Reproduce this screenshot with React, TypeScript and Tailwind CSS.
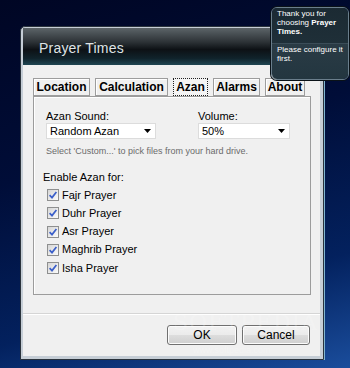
import React from "react";

const tabs = [
  { label: "Location", w: "w-[57px]", active: false },
  { label: "Calculation", w: "w-[73px]", active: false },
  { label: "Azan", w: "w-[35px]", active: true },
  { label: "Alarms", w: "w-[47px]", active: false },
  { label: "About", w: "w-[40px]", active: false },
];

const prayers = ["Fajr Prayer", "Duhr Prayer", "Asr Prayer", "Maghrib Prayer", "Isha Prayer"];

function Arrow() {
  return (
    <svg width="7" height="4" viewBox="0 0 7 4" className="shrink-0">
      <polygon points="0,0 7,0 3.5,4" fill="#000" />
    </svg>
  );
}

function Select({ value, w }: { value: string; w: string }) {
  return (
    <div className={`${w} h-[16px] bg-white border border-[#dcdcdc] flex items-center justify-between pl-[3px] pr-[4px]`}>
      <span className="text-[11px] leading-none text-black">{value}</span>
      <Arrow />
    </div>
  );
}

function Checkbox() {
  return (
    <div className="w-[12px] h-[12px] border border-[#8e8f8f] bg-[linear-gradient(135deg,#d6d6d6,#fbfbfb)] flex items-center justify-center">
      <svg width="10" height="10" viewBox="0 0 10 10">
        <path d="M1.6 5.2 L4 7.6 L8.4 2" stroke="#3b5fc9" strokeWidth="1.7" fill="none" />
      </svg>
    </div>
  );
}

function Button({ label, w }: { label: string; w: string }) {
  return (
    <div
      className={`${w} h-[20px] rounded-[3px] border border-[#707070] shadow-[inset_0_0_0_1px_#fcfcfc] bg-[linear-gradient(to_bottom,#f2f2f2_0%,#ebebeb_50%,#dddddd_51%,#cfcfcf_100%)] flex items-center justify-center text-[12px] text-black`}
    >
      {label}
    </div>
  );
}

export default function App() {
  return (
    <div className="relative w-[350px] h-[368px] overflow-hidden font-['Liberation_Sans',Arial,sans-serif] bg-[linear-gradient(165deg,#000624_0%,#000d38_40%,#03215e_75%,#1a4d9c_100%)]">
      <div className="pt-[26px] pl-[20px]">
        {/* dialog window */}
        <div className="w-[304px] h-[334px] flex flex-col rounded-t-[5px] border border-[#2a333c] bg-[#c6ced6] pt-[1px] pl-[2px] pr-[3px] pb-[3px] shadow-[1px_0_0_#7fb4d0]">
          <div className="h-[37px] shrink-0 flex items-center pl-[16px] pt-[3px] bg-[linear-gradient(to_bottom,#5c6468_0%,#2c3236_38%,#0d1115_58%,#10232b_82%,#1f4652_100%)]">
            <span className="text-[14px] text-[#dfe3e5] tracking-[0.2px]">Prayer Times</span>
          </div>

          <div className="flex-1 bg-[#f0f0f0] flex flex-col">
            <div className="pt-[13px] pl-[10px]">
              {/* tabs */}
              <div className="flex gap-[5px] h-[18px]">
                {tabs.map((t) => (
                  <div
                    key={t.label}
                    className={
                      t.active
                        ? `${t.w} h-[18px] border border-dotted border-[#202020] bg-[#f4f4f4] flex items-center justify-center text-[12px] font-bold text-black`
                        : `${t.w} h-[18px] border border-[#9d9d9d] shadow-[inset_1px_1px_0_#ffffff] bg-[#f0f0f0] flex items-center justify-center text-[12px] font-bold text-black`
                    }
                  >
                    {t.label}
                  </div>
                ))}
              </div>

              {/* panel */}
              <div className="w-[278px] h-[199px] border border-[#9c9c9c] shadow-[inset_1px_1px_0_#ffffff] pt-[13px] pl-[12px] flex flex-col">
                <div className="flex">
                  <div className="w-[152px] flex flex-col">
                    <span className="text-[11px] leading-[13px] text-black">Azan Sound:</span>
                    <Select value="Random Azan" w="w-[110px]" />
                  </div>
                  <div className="flex flex-col">
                    <span className="text-[11px] leading-[13px] text-black">Volume:</span>
                    <Select value="50%" w="w-[92px]" />
                  </div>
                </div>
                <p className="mt-[7px] text-[9px] leading-[11px] text-[#6b6b6b]">
                  Select 'Custom...' to pick files from your hard drive.
                </p>
                <p className="mt-[14px] -ml-[3px] text-[11px] leading-[13px] text-black">Enable Azan for:</p>
                <div className="mt-[2px] flex flex-col">
                  {prayers.map((p) => (
                    <div key={p} className="h-[18.25px] flex items-center gap-[3px] pl-[1px]">
                      <Checkbox />
                      <span className="text-[11px] leading-none text-black">{p}</span>
                    </div>
                  ))}
                </div>
              </div>
            </div>

            <div className="mt-[18px] h-[2px] border-t border-[#d5d5d5] bg-white" />

            <div className="mt-[10px] pr-[10px] flex justify-end gap-[5px]">
              <Button label="OK" w="w-[70px]" />
              <Button label="Cancel" w="w-[68px]" />
            </div>
          </div>
        </div>
      </div>

      {/* balloon tip */}
      <div className="absolute left-[271px] top-[7px] w-[78px] h-[73px] rounded-[6px] border border-[#6a7e8c] shadow-[0_0_0_1px_#0a1218] overflow-hidden text-[8px] leading-[9px] text-white">
        <div className="h-[35px] bg-[linear-gradient(to_bottom,#1b2a33,#1f2f38)] pt-[1px] pl-[5px]">
          <p>Thank you for</p>
          <p>
            choosing <b>Prayer</b>
          </p>
          <p>
            <b>Times.</b>
          </p>
        </div>
        <div className="h-[36px] border-t border-[#3b4d58] bg-[linear-gradient(to_bottom,#2a3b45,#233640)] pt-[1px] pl-[5px]">
          <p>Please configure it</p>
          <p>first.</p>
        </div>
      </div>

      {/* watermark */}
      <div className="absolute left-[173px] top-[312px] text-[22px] leading-none font-['DejaVu_Serif',serif] tracking-[1px] text-white/20 pointer-events-none">
        SOFTPEDIA
      </div>
      <div className="absolute left-[193px] top-[346px] text-[9px] leading-none text-white/25 pointer-events-none">www.softpedia.com</div>
    </div>
  );
}
